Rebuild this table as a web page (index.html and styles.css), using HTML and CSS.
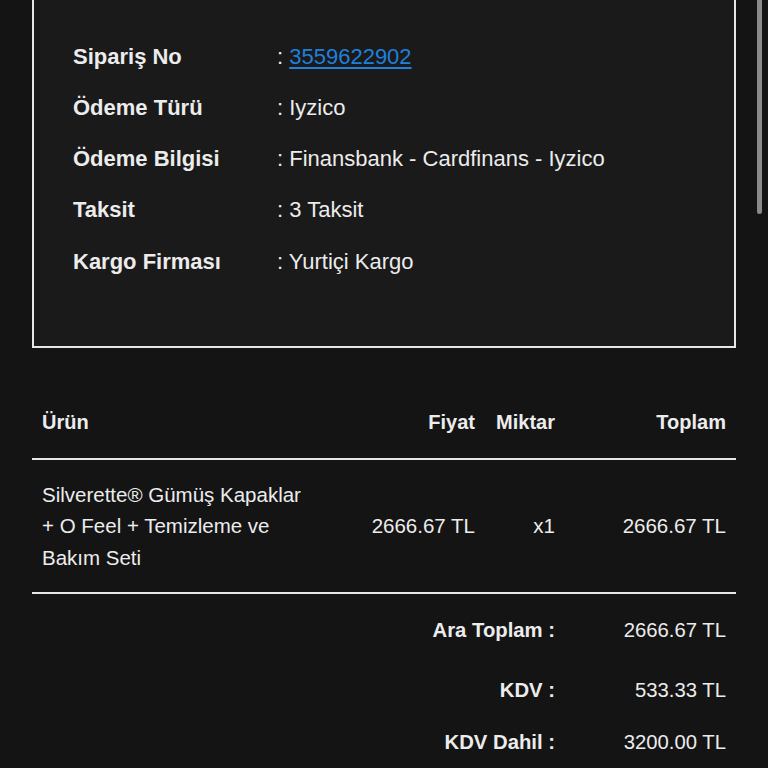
FILE: index.html
```html
<!DOCTYPE html>
<html lang="tr">
<head>
<meta charset="utf-8">
<title>Sipariş Detayı</title>
<link rel="stylesheet" href="styles.css">
</head>
<body>
<div class="page">
  <section class="info-box">
    <div class="info-row"><div class="info-label">Sipariş No</div><div class="info-value">: <a href="#" class="order-link">3559622902</a></div></div>
    <div class="info-row"><div class="info-label">Ödeme Türü</div><div class="info-value">: Iyzico</div></div>
    <div class="info-row"><div class="info-label">Ödeme Bilgisi</div><div class="info-value">: Finansbank - Cardfinans - Iyzico</div></div>
    <div class="info-row"><div class="info-label">Taksit</div><div class="info-value">: 3 Taksit</div></div>
    <div class="info-row"><div class="info-label">Kargo Firması</div><div class="info-value">: Yurtiçi Kargo</div></div>
  </section>

  <table class="items">
    <colgroup>
      <col class="c-product"><col class="c-price"><col class="c-qty"><col class="c-total">
    </colgroup>
    <thead>
      <tr>
        <th class="left">Ürün</th>
        <th class="right">Fiyat</th>
        <th class="right">Miktar</th>
        <th class="right">Toplam</th>
      </tr>
    </thead>
    <tbody>
      <tr>
        <td class="left">Silverette® Gümüş Kapaklar + O Feel + Temizleme ve Bakım Seti</td>
        <td class="right">2666.67 TL</td>
        <td class="right">x1</td>
        <td class="right">2666.67 TL</td>
      </tr>
    </tbody>
  </table>

  <div class="totals">
    <div class="total-row"><div class="total-label">Ara Toplam :</div><div class="total-value">2666.67 TL</div></div>
    <div class="total-row gap"><div class="total-label">KDV :</div><div class="total-value">533.33 TL</div></div>
    <div class="total-row"><div class="total-label">KDV Dahil :</div><div class="total-value">3200.00 TL</div></div>
  </div>
</div>
<div class="scrollbar"></div>
</body>
</html>
```

FILE: styles.css
```css
html, body {
  margin: 0;
  padding: 0;
  background: #141414;
  color: #ececec;
  font-family: "Liberation Sans", Arial, sans-serif;
  overflow: hidden;
}

.page {
  width: 704px;
  margin: 0 0 0 32px;
}

.info-box {
  margin-top: -30px;
  border: 2px solid #e6e6e6;
  background: #1a1a1a;
  padding: 58.5px 39px 59px 39px;
}

.info-row {
  display: grid;
  grid-template-columns: 204px 1fr;
  font-size: 22px;
  line-height: 31.25px;
  padding: 10px 0;
}

.info-label {
  font-weight: bold;
}

.order-link {
  color: #1f80dc;
  text-decoration: underline;
  text-decoration-thickness: 2px;
  text-underline-offset: 3px;
}

.items {
  width: 704px;
  margin-top: 39px;
  border-collapse: collapse;
  table-layout: fixed;
}

.c-product { width: 290px; }
.c-price { width: 163px; }
.c-qty { width: 80px; }
.c-total { width: 171px; }

.items th {
  font-size: 20px;
  font-weight: bold;
  line-height: 31px;
  padding: 20px 10px 20px 10px;
  border-bottom: 2px solid #e6e6e6;
}

.items td {
  font-size: 20.5px;
  line-height: 31.5px;
  padding: 19px 10px;
  border-bottom: 2px solid #e6e6e6;
  vertical-align: middle;
}

.left { text-align: left; }
.right { text-align: right; }

.totals {
  padding-top: 10px;
}

.total-row {
  display: grid;
  grid-template-columns: 533px 171px;
  font-size: 20.3px;
  line-height: 31px;
  padding: 10.5px 0;
}

.total-row.gap {
  margin-top: 8px;
}

.total-label {
  font-weight: bold;
  text-align: right;
  padding-right: 10px;
}

.total-value {
  text-align: right;
  padding-right: 10px;
}

.scrollbar {
  position: fixed;
  top: 0;
  left: 757px;
  width: 5px;
  height: 214px;
  background: #8a8a8a;
  border-radius: 0 0 3px 3px;
}
```
